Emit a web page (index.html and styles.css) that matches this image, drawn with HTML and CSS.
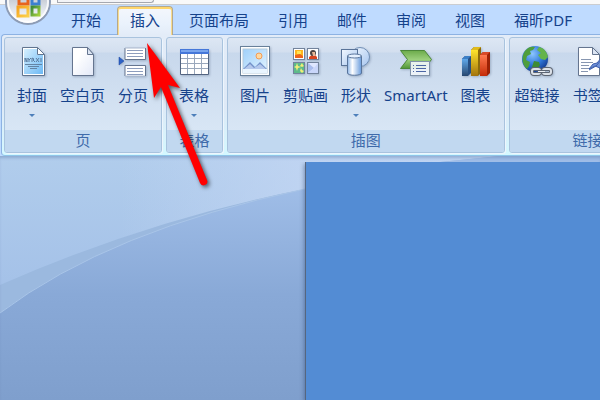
FILE: index.html
```html
<!DOCTYPE html>
<html lang="zh-CN">
<head>
  <meta charset="UTF-8">
  <meta name="viewport" content="width=device-width, initial-scale=1.0">
  <title>插入</title>
  <link rel="stylesheet" href="styles.css">
</head>
<body>
  <header class="title-bar">
    <div class="quick-access"></div>
    <button class="office-button" aria-label="Office">
      <svg width="48" height="48" viewBox="0 0 48 48">
        <defs>
          <linearGradient id="orb" x1="0" y1="0" x2="0" y2="1">
            <stop offset="0.4" stop-color="#c4c9d2"/>
            <stop offset="0.7" stop-color="#e4e8ee"/>
            <stop offset="1" stop-color="#ffffff"/>
          </linearGradient>
          <linearGradient id="logo-gold" x1="0" y1="0" x2="1" y2="1">
            <stop offset="0" stop-color="#f6a21c"/>
            <stop offset="1" stop-color="#fbd04a"/>
          </linearGradient>
          <linearGradient id="logo-green" x1="0" y1="0" x2="1" y2="1">
            <stop offset="0" stop-color="#3c8a3a"/>
            <stop offset="1" stop-color="#a4cf3c"/>
          </linearGradient>
        </defs>
        <circle cx="24" cy="24" r="22" fill="url(#orb)" stroke="#8d9cb5" stroke-width="2"/>
        <circle cx="24" cy="24" r="20" fill="none" stroke="#fff" stroke-width="2" opacity="0.8"/>
        <g fill="none" stroke-width="3">
          <path d="M15 16h9v10h-9z" stroke="#e8641c"/>
          <path d="M28 18h7v8h-7z" stroke="#3c7fd0"/>
          <path d="M14 29h10v9H14z" stroke="url(#logo-gold)"/>
          <path d="M28 29h7v8h-7z" stroke="url(#logo-green)"/>
        </g>
      </svg>
    </button>
  </header>

  <nav class="tabs">
    <button class="tab">开始</button>
    <button class="tab active">插入</button>
    <button class="tab">页面布局</button>
    <button class="tab">引用</button>
    <button class="tab">邮件</button>
    <button class="tab">审阅</button>
    <button class="tab">视图</button>
    <button class="tab">福昕PDF</button>
  </nav>

  <div class="ribbon">
    <section class="group">
      <div class="group-body">
        <button class="tool">
          <svg class="icon" viewBox="0 0 32 32">
            <defs>
              <linearGradient id="cover" x1="0" y1="0" x2="1" y2="1">
                <stop offset="0" stop-color="#d5effe"/>
                <stop offset="1" stop-color="#6db9f4"/>
              </linearGradient>
            </defs>
            <path d="M6.500 1.500h15l7 7v21h-22z" fill="#fff" stroke="#62758f"/>
            <path d="M8 3h13v6h6v19H8z" fill="url(#cover)"/>
            <path d="M21.500 1.500v7h7z" fill="#fff" stroke="#62758f"/>
            <path d="M9 16v-4l2 4v-4M12 12l1 2 2-2M13 14v2M16 16v-4l2 1-1 1 2 2M20 16l3-4M20 12l3 4M25 12v4" fill="none" stroke="#5c7c9f"/>
            <path d="M9 18.500h17M12 20.500h11M14 22.500h7" stroke="#6484a4"/>
          </svg>
          <span class="tool-name">封面</span>
          <span class="caret"></span>
        </button>
        <button class="tool">
          <svg class="icon" viewBox="0 0 32 32">
            <defs>
              <linearGradient id="paper" x1="0" y1="0" x2="1" y2="1">
                <stop offset="0.3" stop-color="#ffffff"/>
                <stop offset="1" stop-color="#e3e9f8"/>
              </linearGradient>
            </defs>
            <path d="M5.500 1.500h15l6 7v21h-21z" fill="url(#paper)" stroke="#65758f"/>
            <path d="M20.500 1.500v7h6z" fill="#dce5f3" stroke="#65758f"/>
          </svg>
          <span class="tool-name">空白页</span>
        </button>
        <button class="tool">
          <svg class="icon" viewBox="0 0 32 32">
            <path d="M8 2v11.500h20.500V2M8 30V19.500h20.500V30" fill="#fff" stroke="#65758f"/>
            <path d="M8 2h20M8 30h20" stroke="#aab8ce"/>
            <path d="M10 4.500h16M10 7.500h16M10 10.500h16M10 22.500h16M10 25.500h16M10 28.500h16" stroke="#8d9dbd"/>
            <path d="M2 11l5 4-5 4z" fill="#2d62c6" stroke="#1e479c" stroke-width="0.500"/>
          </svg>
          <span class="tool-name">分页</span>
        </button>
      </div>
      <div class="group-name">页</div>
    </section>

    <section class="group">
      <div class="group-body">
        <button class="tool">
          <svg class="icon" viewBox="0 0 32 32">
            <path d="M2.500 4h28v24.500h-28z" fill="#fff" stroke="#536480"/>
            <path d="M2 3h29v5H2z" fill="#4577d9"/>
            <path d="M3 4h27v2H3z" fill="#79a5ee"/>
            <path d="M3 12.500h27M3 17.500h27M3 22.500h27" stroke="#9aa8bc"/>
            <path d="M9.500 8v20M16.500 8v20M23.500 8v20" stroke="#9aa8bc"/>
          </svg>
          <span class="tool-name">表格</span>
          <span class="caret"></span>
        </button>
      </div>
      <div class="group-name">表格</div>
    </section>

    <section class="group">
      <div class="group-body">
        <button class="tool">
          <svg class="icon" viewBox="0 0 32 32">
            <defs>
              <linearGradient id="sky" x1="0" y1="0" x2="1" y2="1">
                <stop offset="0" stop-color="#9fd0fa"/>
                <stop offset="1" stop-color="#e3f4ff"/>
              </linearGradient>
            </defs>
            <rect x="1.500" y="0.500" width="29" height="29" fill="#fff" stroke="#68809a"/>
            <rect x="4" y="3" width="24" height="24" fill="url(#sky)" stroke="#b4c9dc"/>
            <circle cx="20" cy="10" r="3" fill="#ffd9a0" stroke="#f39b55"/>
            <path d="M4 23l7-7 5 5 5-5 7 7z" fill="#7291c9"/>
            <path d="M5 23l6-5 4 4 6-4 6 5z" fill="#b4c8ec"/>
            <path d="M4 23h24v4H4z" fill="#e9f5ff"/>
          </svg>
          <span class="tool-name">图片</span>
        </button>
        <button class="tool">
          <svg class="icon" viewBox="0 0 32 32">
            <g stroke="#73839c">
              <rect x="3.500" y="2.500" width="11" height="11" fill="#fff"/>
              <rect x="17.500" y="2.500" width="11" height="11" fill="#fff"/>
              <rect x="3.500" y="16.500" width="11" height="11" fill="#5dba8b"/>
              <rect x="17.500" y="16.500" width="11" height="11" fill="#dfe7ff"/>
            </g>
            <path d="M5 4h8v8H5z" fill="#ffb51f"/>
            <path d="M5 9l5-1 3 2v2H5z" fill="#ee641d"/>
            <path d="M7 5h4v3H7z" fill="#ffe553"/>
            <path d="M19 13v-2l3-2h3l2 2v2z" fill="#d8451f"/>
            <circle cx="23" cy="7" r="3" fill="#4d4442"/>
            <path d="M22 6h3v4h-2z" fill="#e9b896"/>
            <path d="M7 17l1 3 3 1-3 1-1 3-1-3-2-1 2-1zM12 17l1 2 1 1-2 1-2-1zM11 22l1 2 2 1-2 2-2-2z" fill="#f3ee78"/>
            <path d="M18 17l6 5-6 5z" fill="#a9bdee"/>
            <path d="M28 17v10H18l6-5z" fill="#c9d6fa"/>
          </svg>
          <span class="tool-name">剪贴画</span>
        </button>
        <button class="tool">
          <svg class="icon" viewBox="0 0 32 32">
            <defs>
              <linearGradient id="can" x1="0" y1="0" x2="1" y2="0">
                <stop offset="0" stop-color="#8db5e6"/>
                <stop offset="0.35" stop-color="#ffffff"/>
                <stop offset="1" stop-color="#689bdc"/>
              </linearGradient>
              <linearGradient id="plate" x1="0" y1="0" x2="1" y2="1">
                <stop offset="0" stop-color="#f2f8ff"/>
                <stop offset="1" stop-color="#a6c5ee"/>
              </linearGradient>
            </defs>
            <circle cx="20" cy="11" r="9.500" fill="url(#plate)" stroke="#718fb5"/>
            <rect x="1.500" y="3.500" width="16" height="16" fill="url(#plate)" stroke="#5a7499"/>
            <path d="M7.500 10v17c0 3 14 3 14 0V10z" fill="url(#can)" stroke="#58749b"/>
            <ellipse cx="14.500" cy="10" rx="7" ry="2" fill="#e5f0fe" stroke="#58749b"/>
          </svg>
          <span class="tool-name">形状</span>
          <span class="caret"></span>
        </button>
        <button class="tool">
          <svg class="icon" viewBox="0 0 32 32">
            <defs>
              <linearGradient id="chevron" x1="0" y1="0" x2="0" y2="1">
                <stop offset="0" stop-color="#6cab4b"/>
                <stop offset="0.5" stop-color="#9bcf7c"/>
                <stop offset="1" stop-color="#4f9637"/>
              </linearGradient>
            </defs>
            <path d="M0.500 4.500h24l7 9-7 9h-24l7-9z" fill="url(#chevron)" stroke="#4b873a"/>
            <rect x="10.500" y="15.500" width="19" height="14" fill="#f4f8fc" fill-opacity="0.9" stroke="#8193a9"/>
            <path d="M16 19.500h10M16 22.500h10M16 25.500h10" stroke="#4c67a5"/>
            <path d="M13 19.500h1M13 22.500h1M13 25.500h1" stroke="#4c67a5"/>
          </svg>
          <span class="tool-name">SmartArt</span>
        </button>
        <button class="tool">
          <svg class="icon" viewBox="0 0 32 32">
            <defs>
              <linearGradient id="bar-blue" x1="0" y1="0" x2="0" y2="1">
                <stop offset="0" stop-color="#5fa8ea"/>
                <stop offset="1" stop-color="#27476f"/>
              </linearGradient>
              <linearGradient id="bar-gold" x1="0" y1="0" x2="0" y2="1">
                <stop offset="0" stop-color="#ffe42c"/>
                <stop offset="1" stop-color="#a2730d"/>
              </linearGradient>
              <linearGradient id="bar-red" x1="0" y1="0" x2="0" y2="1">
                <stop offset="0" stop-color="#ff7a50"/>
                <stop offset="1" stop-color="#c42b08"/>
              </linearGradient>
            </defs>
            <path d="M2 13l3-3h6v17l-3 3H2z" fill="#264f83"/>
            <path d="M2 13h6v17H2z" fill="url(#bar-blue)"/>
            <path d="M2 13l3-3h6l-3 3z" fill="#3c7fc6"/>
            <path d="M11 4l3-3h7v26l-3 3h-7z" fill="#8d6a0b"/>
            <path d="M11 4h7v26h-7z" fill="url(#bar-gold)"/>
            <path d="M11 4l3-3h7l-3 3z" fill="#e0bb1d"/>
            <path d="M20 9l3-3h7v21l-3 3h-7z" fill="#9d2105"/>
            <path d="M20 9h7v21h-7z" fill="url(#bar-red)"/>
            <path d="M20 9l3-3h7l-3 3z" fill="#d84a28"/>
          </svg>
          <span class="tool-name">图表</span>
        </button>
      </div>
      <div class="group-name">插图</div>
    </section>

    <section class="group links">
      <div class="group-body">
        <button class="tool">
          <svg class="icon" viewBox="0 0 32 32">
            <defs>
              <radialGradient id="ocean" cx="0.4" cy="0.3" r="0.7">
                <stop offset="0" stop-color="#8cc6ff"/>
                <stop offset="0.6" stop-color="#2f77d8"/>
                <stop offset="1" stop-color="#153f96"/>
              </radialGradient>
            </defs>
            <circle cx="14" cy="13" r="13" fill="url(#ocean)"/>
            <path d="M4 5c3-4 6-5 10-4l-2 3-3 1 1 3-4 2-1 4 4 2-1 4-2 3C1 19 0 11 4 5z" fill="#4f9e3c"/>
            <path d="M18 1c5 1 8 5 9 10l-3 3-4-1-3-4 3-2-4-3z" fill="#64b44a"/>
            <path d="M13 15l5 1 1 3-4 6-4-4z" fill="#3f8b33"/>
            <g fill="none" stroke="#5d6572" stroke-width="4">
              <rect x="11" y="23" width="8" height="5" rx="2"/>
              <rect x="22" y="23" width="8" height="5" rx="2"/>
            </g>
            <g fill="none" stroke="#dce1e8" stroke-width="2">
              <rect x="11" y="23" width="8" height="5" rx="2"/>
              <rect x="22" y="23" width="8" height="5" rx="2"/>
            </g>
            <path d="M17 25.500h7" stroke="#5d6572" stroke-width="3"/>
            <path d="M17 25.500h7" stroke="#eef1f5"/>
          </svg>
          <span class="tool-name">超链接</span>
        </button>
        <button class="tool">
          <svg class="icon" viewBox="0 0 32 32">
            <path d="M6.500 1.500h14l7 7v21h-21z" fill="#fff" stroke="#65758f"/>
            <path d="M20.500 1.500v7h7z" fill="#dce5f3" stroke="#65758f"/>
            <path d="M9 13.500h10M9 16.500h12M9 19.500h8M9 22.500h9M9 25.500h7" stroke="#8796b0"/>
            <path d="M17 23l4-5 4-1 5-6 2 1v6l-4 4-5-2z" fill="#7292d8" stroke="#3d5fae"/>
            <path d="M17 24l7-4 6-7" fill="none" stroke="#3d5fae"/>
          </svg>
          <span class="tool-name">书签</span>
        </button>
      </div>
      <div class="group-name">链接</div>
    </section>
  </div>

  <main class="workspace">
    <svg class="backdrop" viewBox="0 0 600 244" preserveAspectRatio="none">
      <defs>
        <linearGradient id="wave-top" x1="0" y1="0" x2="0" y2="1">
          <stop offset="0" stop-color="#b1cdec"/>
          <stop offset="0.55" stop-color="#a4c1e8"/>
        </linearGradient>
        <linearGradient id="wave-light" x1="0" y1="0" x2="1" y2="0">
          <stop offset="0.2" stop-color="#c5d7f4" stop-opacity="0"/>
          <stop offset="0.5" stop-color="#c5d7f4" stop-opacity="0.7"/>
        </linearGradient>
        <linearGradient id="wave-low" gradientUnits="userSpaceOnUse" x1="0" y1="33" x2="0" y2="244">
          <stop offset="0" stop-color="#9fbde7"/>
          <stop offset="0.5" stop-color="#89a9d7"/>
          <stop offset="1" stop-color="#7f9fcd"/>
        </linearGradient>
      </defs>
      <rect width="600" height="244" fill="url(#wave-top)"/>
      <rect width="600" height="100" fill="url(#wave-light)"/>
      <path d="M0 129Q150 63 305 33Q380 14 440 6L500 0H600V244H0z" fill="#9bb9df"/>
      <path d="M0 157Q110 74 305 33Q380 14 440 6L500 0H600V244H0z" fill="url(#wave-low)"/>
      <path d="M0 157Q110 74 305 33" fill="none" stroke="#a9c5e8"/>
    </svg>
    <div class="document"></div>
  </main>

  <!-- Pointer to the active tab -->
  <svg class="pointer" width="80" height="160" viewBox="0 0 80 160">
    <path d="M7 8L40 53L28 50L67 145A3.500 3.500 0 0 1 60 148L21 52L14 63z" fill="#ff0000"/>
  </svg>
</body>
</html>
```
FILE: styles.css
```css
* {
  box-sizing: border-box;
}

body {
  margin: 0;
  min-height: 100vh;
  display: flex;
  flex-direction: column;
  overflow: hidden;
  position: relative;
  background-color: #bfdbff;
  color: #15428b;
  font-family: "Noto Sans", "Noto Sans CJK SC", sans-serif;
  font-size: 15px;
  line-height: 20px;
}

button {
  margin: 0;
  padding: 0;
  border: none;
  background: none;
  color: inherit;
  font: inherit;
  cursor: pointer;
}

.title-bar {
  height: 5px;
  padding-left: 57px;
  background-color: #f9f9f9;
  border-bottom: 1px solid #cbcdd0;
}

.quick-access {
  width: 97px;
  height: 3px;
  background-color: #f2f3f6;
  border: 1px solid #a5a8b0;
  border-top: none;
  border-radius: 0 0 8px 0;
}

.office-button {
  position: absolute;
  top: -22px;
  left: 4px;
  width: 48px;
  height: 48px;
}

.office-button svg {
  display: block;
}

/* Tabs */
.tabs {
  display: flex;
  gap: 3px;
  padding: 1px 0 0 58px;
  background-color: #bfdbff;
}

.tab {
  flex: none;
  height: 28px;
  padding: 0 12px 2px;
  border: 1px solid transparent;
  border-bottom: none;
  border-radius: 4px 4px 0 0;
  white-space: nowrap;
}

.tab.active {
  position: relative;
  z-index: 1;
  height: 29px;
  margin-bottom: -1px;
  padding-bottom: 3px;
  border-color: #b5a88c;
  background: linear-gradient(#f4f7fc, #eaf2fc 60%, #e3ecf8);
  box-shadow: inset 0 2px #ffd66b, inset 1px 0 #f8dc8e, inset -1px 0 #f8dc8e;
}

/* Ribbon */
.ribbon {
  display: flex;
  gap: 4px;
  margin-left: 1px;
  padding: 2px;
  border: 1px solid #8db2e3;
  border-bottom-color: #8fc5e9;
  border-right: none;
  border-radius: 4px 0 0 4px;
  background: linear-gradient(#e3ecf8, #dfeaf7 60%, #d4f8ff);
  overflow: hidden;
}

.group {
  flex: none;
  border: 1px solid #a9c3de;
  border-radius: 3px;
  background: linear-gradient(#dde7f4, #d3dfef 14px, #c8d8ec 15px, #d8e6f5 92px);
  box-shadow: 1px 1px #edf5fd;
  overflow: hidden;
}

.links {
  flex: 1 0 158px;
}

.group-body {
  display: flex;
  gap: 13px;
  height: 92px;
  padding: 8px 13px 0 12px;
}

.links .group-body {
  padding-left: 5px;
}

.tool {
  display: flex;
  flex-direction: column;
  align-items: center;
  justify-content: flex-start;
  white-space: nowrap;
}

.icon {
  width: 32px;
  height: 32px;
  margin: 0 -1px 7px;
  filter: drop-shadow(1px 1px 1px rgba(60, 80, 110, 0.3));
}

.caret {
  margin-top: 9px;
  border: 3px solid transparent;
  border-top-color: #4d7fba;
  border-bottom: none;
}

.group-name {
  height: 22px;
  padding-bottom: 2px;
  text-align: center;
  color: #3e6aaa;
  background-color: #c1d8f0;
}

/* Workspace */
.workspace {
  position: relative;
  flex: 1;
  display: grid;
  grid-template-columns: 305px 1fr;
  padding-top: 6px;
  box-shadow: inset 0 3px 3px -1px rgba(90, 120, 170, 0.4);
}

.backdrop {
  position: absolute;
  z-index: -1;
  top: 0;
  left: 0;
  width: 100%;
  height: 100%;
}

.document {
  grid-column: 2;
  position: relative;
  background-color: #538cd4;
  border-left: 1px solid #56667f;
  box-shadow: -1px 2px 4px rgba(50, 75, 120, 0.5);
  clip-path: inset(0 0 0 -6px);
}

.pointer {
  position: absolute;
  top: 35px;
  left: 140px;
  z-index: 2;
  pointer-events: none;
  filter: drop-shadow(2px 2px 2px rgba(0, 0, 0, 0.6));
}
```
